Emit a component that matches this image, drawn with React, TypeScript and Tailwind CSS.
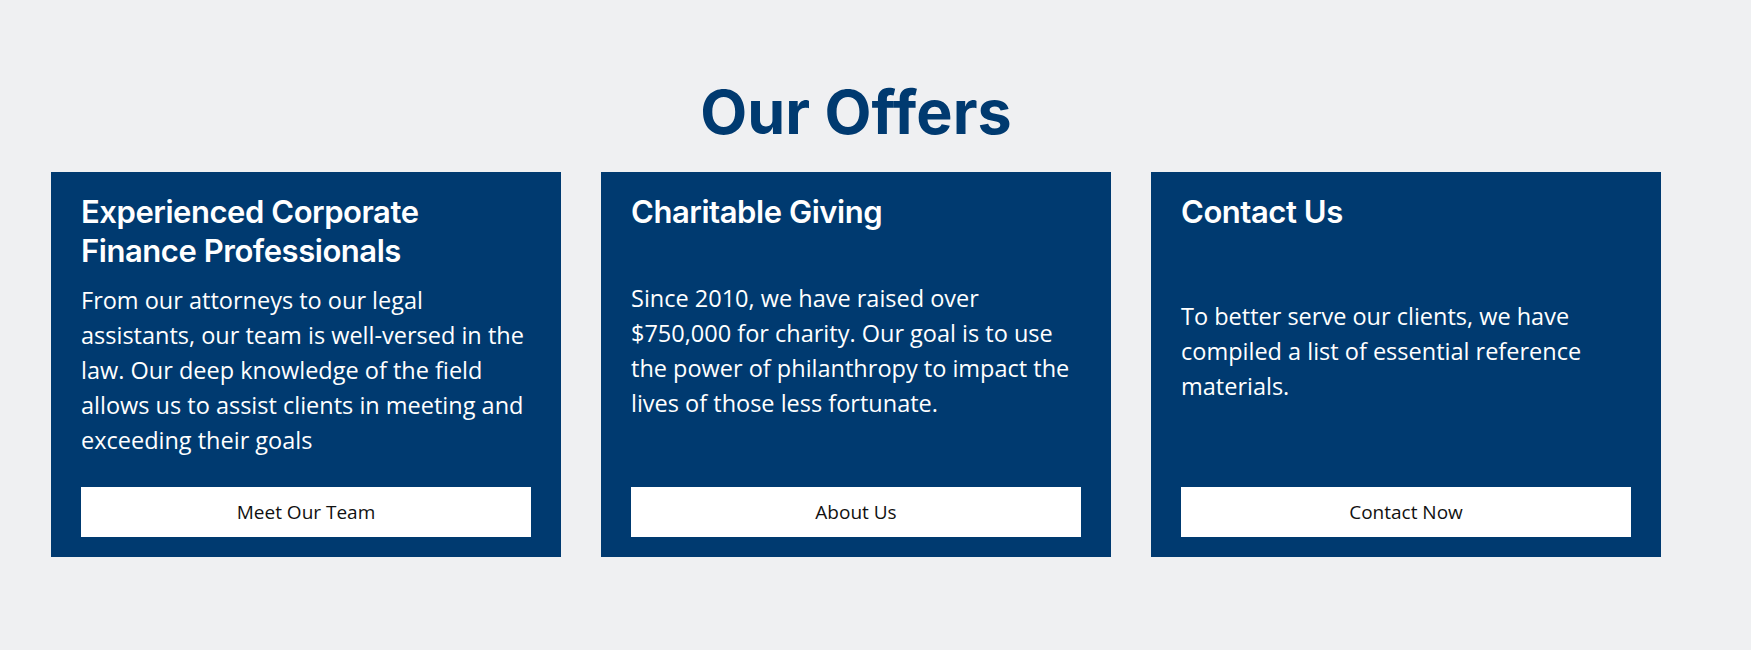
import React from 'react';

const offers = [
  {
    title: 'Experienced Corporate Finance Professionals',
    body: 'From our attorneys to our legal assistants, our team is well-versed in the law. Our deep knowledge of the field allows us to assist clients in meeting and exceeding their goals',
    cta: 'Meet Our Team',
  },
  {
    title: 'Charitable Giving',
    body: 'Since 2010, we have raised over $750,000 for charity. Our goal is to use the power of philanthropy to impact the lives of those less fortunate.',
    cta: 'About Us',
  },
  {
    title: 'Contact Us',
    body: 'To better serve our clients, we have compiled a list of essential reference materials.',
    cta: 'Contact Now',
  },
];

export default function App() {
  return (
    <section className="min-h-[650px] w-full bg-[#eff0f2] pt-[76px]">
      <div className="w-[1712px] px-[51px]">
        {/* Section heading */}
        <h2 className="mb-[24px] text-center font-['Inter',sans-serif] text-[61px] font-bold leading-[72px] text-[#003a70]">
          Our Offers
        </h2>

        {/* Offer cards */}
        <div className="grid grid-cols-3 gap-10">
          {offers.map((offer) => (
            <div
              key={offer.cta}
              className="flex flex-col justify-between bg-[#003a70] px-[30px] pt-[20px] pb-[20px]"
            >
              <h3 className="mb-[13px] font-['Inter',sans-serif] text-[31px] font-semibold leading-[39px] tracking-[-0.45px] text-white">
                {offer.title}
              </h3>
              <p className="mb-[29px] font-['Open_Sans',sans-serif] text-[23.5px] leading-[35px] text-white">
                {offer.body}
              </p>
              <a
                href="#"
                className="flex h-[50px] items-center justify-center bg-white font-['Open_Sans',sans-serif] text-[19px] text-[#111]"
              >
                {offer.cta}
              </a>
            </div>
          ))}
        </div>
      </div>
    </section>
  );
}
